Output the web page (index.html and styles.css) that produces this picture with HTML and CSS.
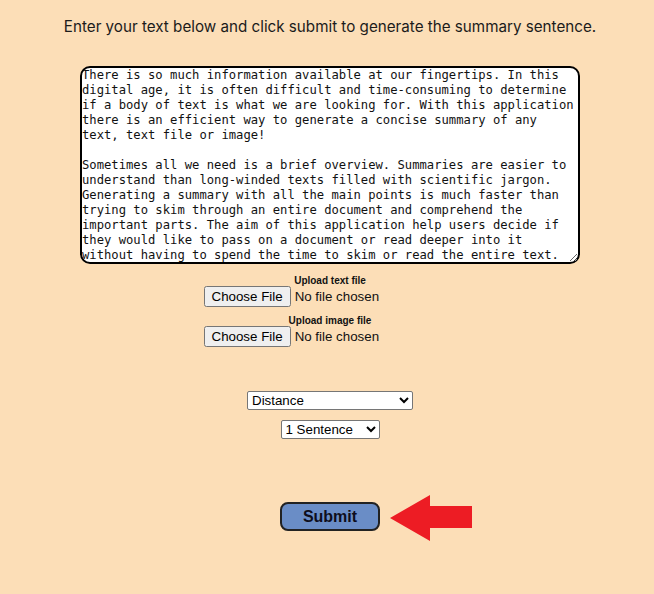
FILE: index.html
```html
<!DOCTYPE html>
<html lang="en">
<head>
<meta charset="utf-8">
<title>Summary Generator</title>
<link rel="stylesheet" href="styles.css">
</head>
<body>
<main class="page">
  <p class="intro">Enter your text below and click submit to generate the summary sentence.</p>
  <textarea class="source" spellcheck="false">There is so much information available at our fingertips. In this digital age, it is often difficult and time-consuming to determine if a body of text is what we are looking for. With this application there is an efficient way to generate a concise summary of any text, text file or image!

Sometimes all we need is a brief overview. Summaries are easier to understand than long-winded texts filled with scientific jargon. Generating a summary with all the main points is much faster than trying to skim through an entire document and comprehend the important parts. The aim of this application help users decide if they would like to pass on a document or read deeper into it without having to spend the time to skim or read the entire text.</textarea>

  <label class="upload-label first" for="textfile">Upload text file</label>
  <input class="file" type="file" id="textfile">

  <label class="upload-label" for="imagefile">Upload image file</label>
  <input class="file" type="file" id="imagefile">

  <select class="sel method">
    <option>Distance</option>
    <option>Frequency of words</option>
  </select>
  <select class="sel count">
    <option>1 Sentence</option>
    <option>2 Sentences</option>
    <option>3 Sentences</option>
  </select>

  <div class="submit-wrap">
    <button class="submit" type="button">Submit</button>
    <svg class="arrow" width="82" height="46" viewBox="0 0 82 46" aria-hidden="true">
      <polygon points="0,23 40,0 40,11 82,11 82,33 40,33 40,46" fill="#ed1c24"/>
    </svg>
  </div>
</main>
</body>
</html>
```

FILE: styles.css
```css
html, body {
  margin: 0;
  padding: 0;
  background: #fcdeb7;
}

.page {
  display: flex;
  flex-direction: column;
  align-items: center;
  padding: 17px 0 40px 6px;
  font-family: "Liberation Sans", Arial, sans-serif;
}

.intro {
  margin: 0;
  font-family: Inter, "Liberation Sans", sans-serif;
  font-size: 15.2px;
  line-height: 20px;
  color: #1b1b1b;
}

.source {
  box-sizing: border-box;
  width: 500px;
  height: 198px;
  margin: 29px 0 0 0;
  padding: 0 3px 0 0;
  border: 2px solid #000;
  border-radius: 10px;
  background: #fff;
  color: #111;
  font-family: "DejaVu Sans Mono", "Liberation Mono", monospace;
  font-size: 12.2px;
  line-height: 15px;
  overflow: hidden;
  resize: both;
  outline: none;
}

.upload-label {
  display: block;
  margin-top: 8px;
  font-size: 10px;
  font-weight: bold;
  line-height: 11px;
  color: #111;
}

.upload-label.first {
  margin-top: 11px;
}

.file {
  font-family: "Liberation Sans", Arial, sans-serif;
  font-size: 13.333px;
  color: #111;
  width: 253px;
}

.sel {
  font-family: "Liberation Sans", Arial, sans-serif;
  font-size: 13.333px;
  color: #000;
  height: 19px;
  background: #fff;
  border: 1px solid #767676;
  border-radius: 2px;
  box-sizing: border-box;
}

.method {
  width: 166px;
  margin-top: 44px;
}

.count {
  width: 99px;
  margin-top: 10px;
}

.submit-wrap {
  position: relative;
  margin-top: 63px;
}

.submit {
  display: block;
  box-sizing: border-box;
  width: 100px;
  height: 29px;
  background: #6a8dc6;
  border: 2px solid #222;
  border-radius: 8px;
  font-family: "Liberation Sans", Arial, sans-serif;
  font-size: 16px;
  font-weight: bold;
  color: #0e0e1c;
  padding: 0;
}

.arrow {
  position: absolute;
  left: 110px;
  top: -7px;
}
```
